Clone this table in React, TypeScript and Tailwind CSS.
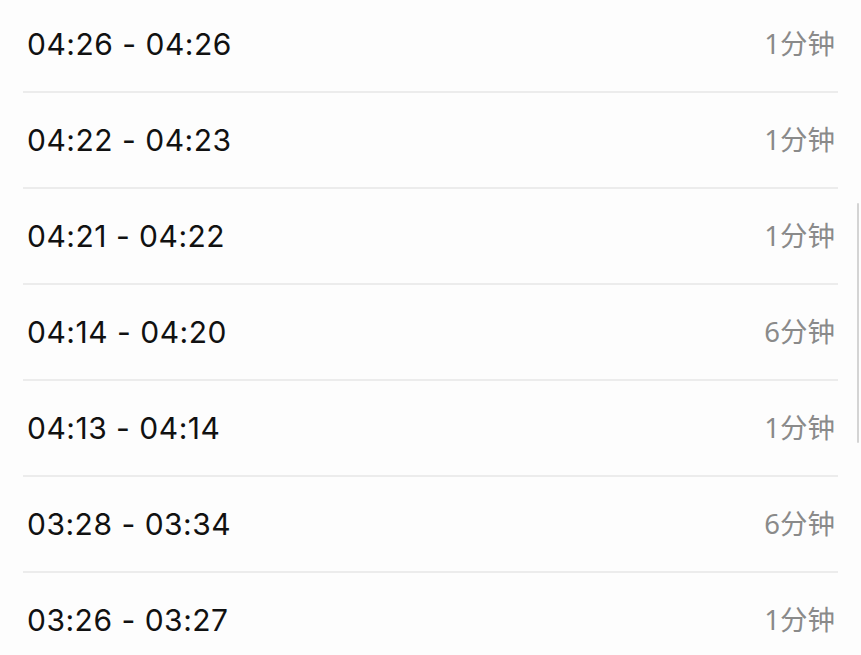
const rows = [
  { range: '04:26 - 04:26', dur: '1分钟' },
  { range: '04:22 - 04:23', dur: '1分钟' },
  { range: '04:21 - 04:22', dur: '1分钟' },
  { range: '04:14 - 04:20', dur: '6分钟' },
  { range: '04:13 - 04:14', dur: '1分钟' },
  { range: '03:28 - 03:34', dur: '6分钟' },
  { range: '03:26 - 03:27', dur: '1分钟' },
];

export default function App() {
  return (
    <div
      className="relative h-[655px] w-[861px] overflow-hidden bg-[#fdfdfd]"
      style={{ fontFamily: 'Inter, "Noto Sans CJK SC", sans-serif' }}
    >
      <ul className="-mt-[3px] mx-[23px]">
        {rows.map((r, i) => (
          <li
            key={i}
            className="flex h-[96px] items-center justify-between border-b-2 border-[#ececec] pl-[4px] pr-[3px]"
          >
            <span className="text-[30px] tracking-[0.5px] text-[#111111]">{r.range}</span>
            <span className="text-[27.5px] text-[#8a8a8a]" style={{ fontFamily: '"Noto Sans", "Noto Sans CJK SC", sans-serif' }}>
              {r.dur}
            </span>
          </li>
        ))}
      </ul>
      <div className="absolute right-[2px] top-[203px] h-[240px] w-[2px] rounded-full bg-[#d4d4d4]" />
    </div>
  );
}
